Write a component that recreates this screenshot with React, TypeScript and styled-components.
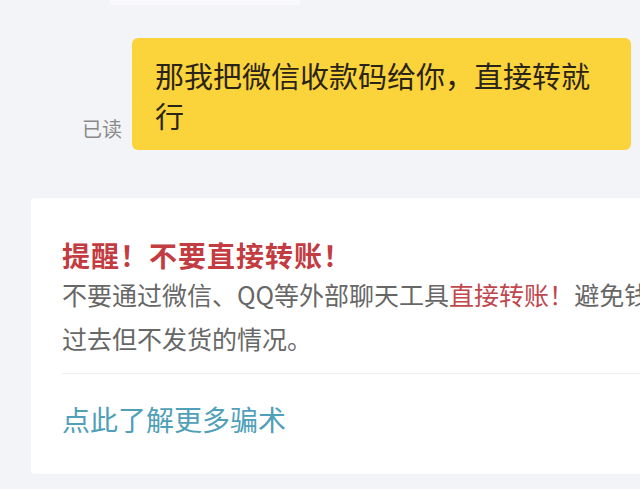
import styled, { createGlobalStyle } from "styled-components";

const GlobalStyle = createGlobalStyle`
  html, body {
    margin: 0;
    padding: 0;
    background: #f3f4f8;
    overflow: hidden;
  }
  body {
    font-family: "Noto Sans CJK SC", "Noto Sans", sans-serif;
  }
`;

const Page = styled.div`
  width: 640px;
  height: 489px;
  overflow: hidden;
`;

const PrevStub = styled.div`
  width: 190px;
  height: 5px;
  margin-left: 110px;
  background: #f9f9fb;
`;

const MessageRow = styled.div`
  display: flex;
  align-items: flex-end;
  gap: 10px;
  margin-top: 33px;
  padding-left: 82px;
`;

const ReadMark = styled.span`
  font-size: 20px;
  line-height: 24px;
  color: #8a8a8a;
  margin-bottom: 9px;
  white-space: nowrap;
`;

const Bubble = styled.div`
  width: 499px;
  box-sizing: border-box;
  padding: 17px 20px 15px 23px;
  background: #fbd33a;
  border-radius: 6px;
  font-size: 29px;
  line-height: 40px;
  color: #2a2418;
`;

const Card = styled.div`
  width: 720px;
  margin: 48px 0 0 31px;
  box-sizing: border-box;
  padding: 40px 0 35px 31px;
  background: #ffffff;
  border-radius: 4px;
`;

const Title = styled.div`
  font-size: 28px;
  line-height: 34px;
  font-weight: 700;
  color: #c23c42;
  letter-spacing: 1px;
`;

const Body = styled.div`
  font-size: 25px;
  line-height: 44px;
  color: #676767;
  white-space: nowrap;
`;

const Warn = styled.span`
  color: #c0474d;
`;

const Divider = styled.div`
  height: 1px;
  margin-top: 13px;
  background: #efeff1;
`;

const MoreLink = styled.a`
  display: block;
  margin-top: 25px;
  font-size: 28px;
  line-height: 40px;
  color: #4fa0b8;
  text-decoration: none;
`;

export default function App() {
  return (
    <Page>
      <GlobalStyle />
      <PrevStub />
      <MessageRow>
        <ReadMark>已读</ReadMark>
        <Bubble>那我把微信收款码给你，直接转就行</Bubble>
      </MessageRow>
      <Card>
        <Title>提醒！不要直接转账！</Title>
        <Body>
          不要通过微信、QQ等外部聊天工具<Warn>直接转账！</Warn>避免钱款转
          <br />
          过去但不发货的情况。
        </Body>
        <Divider />
        <MoreLink href="#">点此了解更多骗术</MoreLink>
      </Card>
    </Page>
  );
}
